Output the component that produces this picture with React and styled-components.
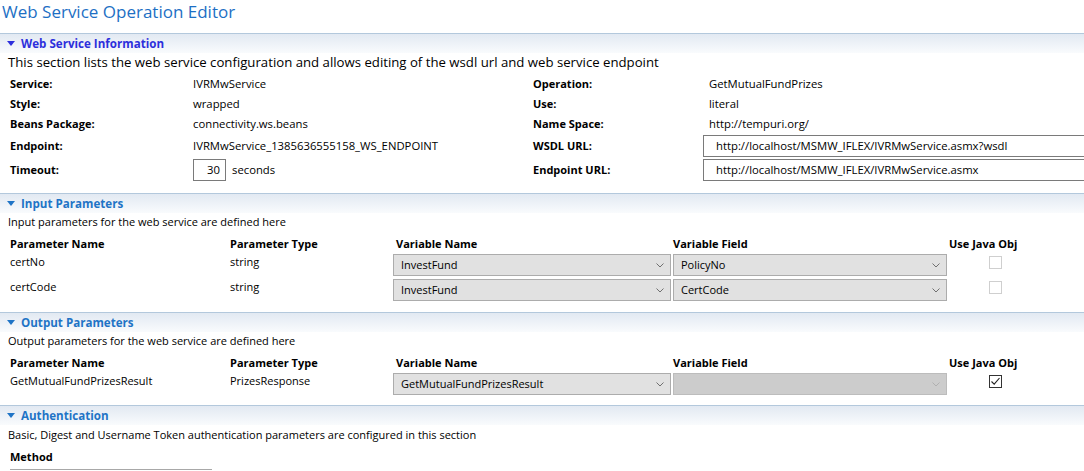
import React from "react";
import styled, { createGlobalStyle } from "styled-components";

const Global = createGlobalStyle`
  html, body { margin: 0; padding: 0; background: #fff; overflow: hidden; }
  body { font-family: "Open Sans", "Noto Sans", sans-serif; font-size: 11.3px; color: #000; }
  * { box-sizing: border-box; }
`;

const Page = styled.div`
  width: 1084px;
  height: 471px;
  overflow: hidden;
  display: flex;
  flex-direction: column;
`;

const Title = styled.h1`
  margin: 0;
  height: 33px;
  padding: 0 0 0 2px;
  font-size: 17px;
  font-weight: 400;
  color: #1d6fc4;
  line-height: 24px;
`;

const Section = styled.section`
  display: flex;
  flex-direction: column;
`;

const Header = styled.div`
  height: 20px;
  border-top: 1px solid #b3c8dc;
  background: linear-gradient(#e2e9f2, #f9fbfd);
  display: flex;
  align-items: center;
  gap: 6px;
  padding-left: 7px;
  font-weight: 700;
  font-size: 11.6px;
  color: ${(p) => (p.$active ? "#2d2fdc" : "#1f74c6")};
`;

const Arrow = styled.svg`
  width: 8px;
  height: 5px;
  flex: none;
`;

const Desc = styled.div`
  padding-left: 8px;
  height: 21px;
  line-height: ${(p) => (p.$lh || 18)}px;
  font-size: ${(p) => (p.$big ? 13.2 : 11)}px;
  white-space: nowrap;
`;

const InfoGrid = styled.div`
  display: grid;
  grid-template-columns: 183px 340px 176px 400px;
  padding-left: 10px;
  align-items: center;
  padding-bottom: ${(p) => p.$pb || 0}px;
`;

const Label = styled.div`
  font-weight: 700;
  font-size: 11px;
  height: ${(p) => p.$h || 20}px;
  line-height: ${(p) => p.$h || 20}px;
`;

const Value = styled.div`
  height: ${(p) => p.$h || 20}px;
  line-height: ${(p) => p.$h || 20}px;
  display: flex;
  align-items: center;
  gap: 6px;
`;

const TextBox = styled.div`
  height: 22px;
  border: 1px solid #7a7a7a;
  background: #fff;
  line-height: 20px;
  white-space: nowrap;
  padding: 0 ${(p) => (p.$right ? 5 : 12)}px 0 ${(p) => (p.$right ? 0 : 12)}px;
  text-align: ${(p) => (p.$right ? "right" : "left")};
  width: ${(p) => p.$w}px;
  margin-left: ${(p) => p.$ml || 0}px;
`;

const ParamGrid = styled.div`
  display: grid;
  grid-template-columns: 220px 163px 280px 276px 1fr;
  padding-left: 10px;
  align-items: start;
  padding-bottom: ${(p) => p.$pb || 0}px;
  font-size: 11px;
`;

const ColHead = styled.div`
  font-weight: 700;
  font-size: 11px;
  height: 16px;
  margin-top: 2px;
  line-height: 16px;
  padding-left: ${(p) => p.$pl || 0}px;
`;

const Cell = styled.div`
  height: 25px;
  padding-top: 1px;
  line-height: 18px;
  display: flex;
  align-items: flex-start;
`;

const Select = styled.div`
  width: ${(p) => p.$w}px;
  height: 22px;
  margin-top: 1px;
  border: 1px solid ${(p) => (p.$disabled ? "#bcbcbc" : "#acacac")};
  background: ${(p) => (p.$disabled ? "#cccccc" : "#e1e1e1")};
  display: flex;
  align-items: center;
  justify-content: space-between;
  padding: 0 6px 0 7px;
  color: #000;
`;

const Chevron = ({ light }) => (
  <svg width="8" height="5" viewBox="0 0 8 5">
    <path d="M0.5 0.5 L4 4 L7.5 0.5" fill="none" stroke={light ? "#b0b0b0" : "#707070"} strokeWidth="1" />
  </svg>
);

const Check = styled.div`
  width: 13px;
  height: 13px;
  margin-top: 3px;
  margin-left: 40px;
  border: 1px solid ${(p) => (p.$checked ? "#333" : "#cfcfcf")};
  background: #fff;
  display: flex;
  align-items: center;
  justify-content: center;
`;

const MethodLine = styled.div`
  margin-left: 10px;
  width: 202px;
  border-top: 1px solid #a8a8a8;
  margin-top: 1px;
`;

const SectionHeader = ({ title, active }) => (
  <Header $active={active}>
    <Arrow viewBox="0 0 8 5">
      <path d="M0 0 H8 L4 5 Z" fill={active ? "#2d2fdc" : "#1f74c6"} />
    </Arrow>
    {title}
  </Header>
);

const Dropdown = ({ w, text, disabled }) => (
  <Select $w={w} $disabled={disabled}>
    <span>{text}</span>
    <Chevron light={disabled} />
  </Select>
);

const ParamHeads = () => (
  <>
    <ColHead>Parameter Name</ColHead>
    <ColHead>Parameter Type</ColHead>
    <ColHead $pl={3}>Variable Name</ColHead>
    <ColHead>Variable Field</ColHead>
    <ColHead>Use Java Obj</ColHead>
  </>
);

export default function App() {
  return (
    <Page>
      <Global />
      <Title>Web Service Operation Editor</Title>

      <Section>
        <SectionHeader title="Web Service Information" active />
        <Desc $big>This section lists the web service configuration and allows editing of the wsdl url and web service endpoint</Desc>
        <InfoGrid $pb={10}>
          <Label>Service:</Label>
          <Value>IVRMwService</Value>
          <Label>Operation:</Label>
          <Value>GetMutualFundPrizes</Value>

          <Label>Style:</Label>
          <Value>wrapped</Value>
          <Label>Use:</Label>
          <Value>literal</Value>

          <Label>Beans Package:</Label>
          <Value>connectivity.ws.beans</Value>
          <Label>Name Space:</Label>
          <Value>http://tempuri.org/</Value>

          <Label $h={23}>Endpoint:</Label>
          <Value $h={23}>IVRMwService_1385636555158_WS_ENDPOINT</Value>
          <Label $h={23}>WSDL URL:</Label>
          <Value $h={23}>
            <TextBox $ml={-6} $w={400}>http://localhost/MSMW_IFLEX/IVRMwService.asmx?wsdl</TextBox>
          </Value>

          <Label $h={26}>Timeout:</Label>
          <Value $h={26}>
            <TextBox $right $w={33}>30</TextBox>
            seconds
          </Value>
          <Label $h={26}>Endpoint URL:</Label>
          <Value $h={26}>
            <TextBox $ml={-6} $w={400}>http://localhost/MSMW_IFLEX/IVRMwService.asmx</TextBox>
          </Value>
        </InfoGrid>
      </Section>

      <Section>
        <SectionHeader title="Input Parameters" />
        <Desc>Input parameters for the web service are defined here</Desc>
        <ParamGrid $pb={10}>
          <ParamHeads />
          <Cell>certNo</Cell>
          <Cell>string</Cell>
          <Cell><Dropdown w={278} text="InvestFund" /></Cell>
          <Cell><Dropdown w={274} text="PolicyNo" /></Cell>
          <Cell><Check /></Cell>

          <Cell>certCode</Cell>
          <Cell>string</Cell>
          <Cell><Dropdown w={278} text="InvestFund" /></Cell>
          <Cell><Dropdown w={274} text="CertCode" /></Cell>
          <Cell><Check /></Cell>
        </ParamGrid>
      </Section>

      <Section>
        <SectionHeader title="Output Parameters" />
        <Desc>Output parameters for the web service are defined here</Desc>
        <ParamGrid $pb={9}>
          <ParamHeads />
          <Cell>GetMutualFundPrizesResult</Cell>
          <Cell>PrizesResponse</Cell>
          <Cell><Dropdown w={278} text="GetMutualFundPrizesResult" /></Cell>
          <Cell><Dropdown w={274} text="" disabled /></Cell>
          <Cell>
            <Check $checked>
              <svg width="11" height="11" viewBox="0 0 11 11">
                <path d="M1.5 5.5 L4.2 8.2 L9.5 2" fill="none" stroke="#222" strokeWidth="1.1" />
              </svg>
            </Check>
          </Cell>
        </ParamGrid>
      </Section>

      <Section>
        <SectionHeader title="Authentication" />
        <Desc $lh={20}>Basic, Digest and Username Token authentication parameters are configured in this section</Desc>
        <InfoGrid>
          <Label $h={22}>Method</Label>
        </InfoGrid>
        <MethodLine />
      </Section>
    </Page>
  );
}
